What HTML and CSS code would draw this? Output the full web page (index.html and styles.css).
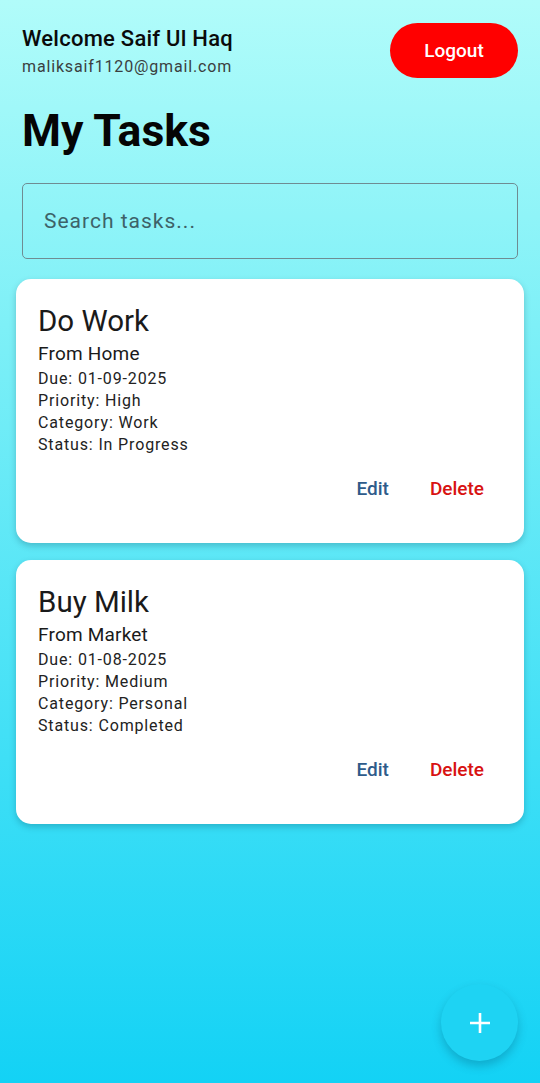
FILE: index.html
```html
<!DOCTYPE html>
<html>
<head>
<meta charset="utf-8">
<link rel="stylesheet" href="styles.css">
</head>
<body>
<div class="screen">
  <header class="top">
    <div class="user">
      <div class="welcome">Welcome Saif Ul Haq</div>
      <div class="email">maliksaif1120@gmail.com</div>
    </div>
    <button class="logout">Logout</button>
  </header>
  <h1 class="title">My Tasks</h1>
  <div class="search"><span class="placeholder">Search tasks...</span></div>
  <div class="list">
    <div class="card">
      <div class="task-title">Do Work</div>
      <div class="task-desc">From Home</div>
      <div class="meta">Due: 01-09-2025</div>
      <div class="meta">Priority: High</div>
      <div class="meta">Category: Work</div>
      <div class="meta">Status: In Progress</div>
      <div class="actions">
        <span class="edit">Edit</span>
        <span class="delete">Delete</span>
      </div>
    </div>
    <div class="card">
      <div class="task-title">Buy Milk</div>
      <div class="task-desc">From Market</div>
      <div class="meta">Due: 01-08-2025</div>
      <div class="meta">Priority: Medium</div>
      <div class="meta">Category: Personal</div>
      <div class="meta">Status: Completed</div>
      <div class="actions">
        <span class="edit">Edit</span>
        <span class="delete">Delete</span>
      </div>
    </div>
  </div>
  <button class="fab" aria-label="Add">
    <svg width="24" height="24" viewBox="0 0 24 24"><path d="M12 2v20M2 12h20" stroke="#fff" stroke-width="2.6" fill="none"/></svg>
  </button>
</div>
</body>
</html>
```
FILE: styles.css
```css
html, body {
  margin: 0;
  padding: 0;
}
body {
  font-family: Roboto, "Noto Sans", sans-serif;
  color: #111;
}
.screen {
  position: relative;
  width: 540px;
  height: 1083px;
  overflow: hidden;
  background: linear-gradient(180deg, #b1fcfa 0%, #7ef0f7 30%, #3fdff6 70%, #13d2f5 100%);
  box-sizing: border-box;
  padding: 24px 22px 0 22px;
}
.top {
  display: flex;
  justify-content: space-between;
  align-items: flex-start;
}
.welcome {
  font-size: 22px;
  font-weight: 500;
  line-height: 30px;
  letter-spacing: 0.25px;
  color: #0a0a0a;
}
.email {
  margin-top: 2px;
  font-size: 16px;
  line-height: 22px;
  color: #3a3f40;
  letter-spacing: 0.85px;
}
.logout {
  width: 128px;
  height: 55px;
  margin-top: -1px;
  margin-right: 0;
  border: none;
  border-radius: 28px;
  background: #ff0000;
  color: #fff;
  font-family: Roboto, sans-serif;
  font-size: 19px;
  font-weight: 500;
  padding: 0;
}
.title {
  margin: 26px 0 0 0;
  font-size: 44.5px;
  font-weight: 700;
  line-height: 54px;
  color: #050505;
}
.search {
  margin-top: 25px;
  height: 76px;
  box-sizing: border-box;
  border: 1.5px solid #6f8c92;
  border-radius: 5px;
  display: flex;
  align-items: center;
  padding-left: 21px;
}
.placeholder {
  font-size: 21px;
  color: #3d6268;
  letter-spacing: 1px;
}
.list {
  margin: 20px -6px 0 -6px;
  display: flex;
  flex-direction: column;
  gap: 17px;
}
.card {
  background: #fff;
  border-radius: 15px;
  height: 264px;
  box-sizing: border-box;
  padding: 23px 22px 0 22px;
  box-shadow: 0 3px 6px rgba(0, 60, 80, 0.25);
}
.task-title {
  font-size: 29.5px;
  line-height: 38px;
  color: #1a1a1a;
}
.task-desc {
  font-size: 19px;
  line-height: 28px;
  letter-spacing: 0.2px;
  color: #1a1a1a;
}
.meta {
  font-size: 16px;
  line-height: 22px;
  color: #222;
  letter-spacing: 0.85px;
}
.actions {
  display: flex;
  justify-content: flex-end;
  gap: 41px;
  margin-top: 21px;
  padding-right: 18px;
  font-size: 19px;
  font-weight: 500;
  line-height: 24px;
}
.edit { color: #2e5b8a; }
.delete { color: #d81212; }
.fab {
  position: absolute;
  left: 441px;
  top: 984px;
  width: 77px;
  height: 77px;
  border-radius: 50%;
  border: none;
  background: #1ed3f3;
  box-shadow: 0 5px 10px rgba(0, 80, 110, 0.3);
  display: flex;
  align-items: center;
  justify-content: center;
  padding: 0;
}
```
